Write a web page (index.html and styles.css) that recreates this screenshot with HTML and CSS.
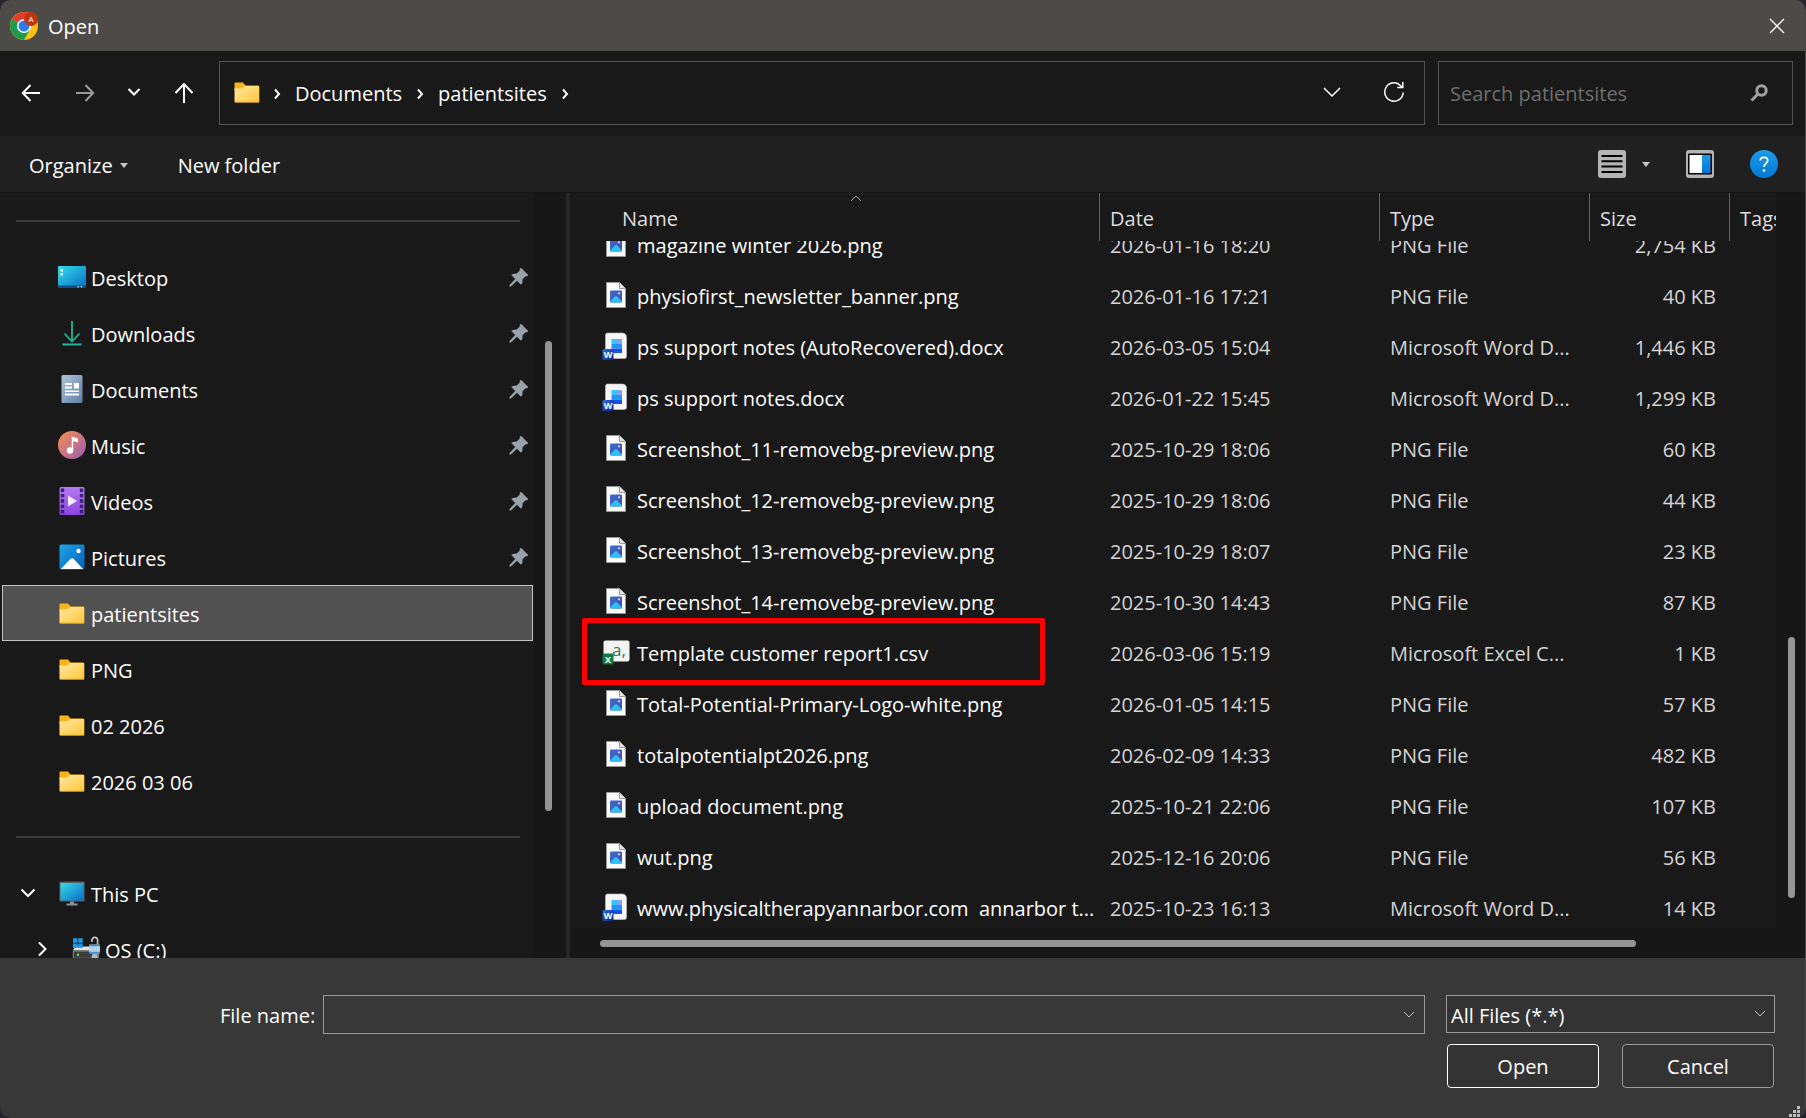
FILE: index.html
```html
<!DOCTYPE html>
<html lang="en">
<head>
  <meta charset="UTF-8">
  <meta name="viewport" content="width=device-width, initial-scale=1.0">
  <title>Open</title>
  <link rel="stylesheet" href="styles.css">
</head>
<body>

<!-- icon sprite -->
<svg class="sprite" width="0" height="0" aria-hidden="true">
  <defs>
    <linearGradient id="gFolder" x1="0" y1="0" x2="1" y2="1"><stop offset="0" stop-color="#ffe9a0"/><stop offset="1" stop-color="#ffc63a"/></linearGradient>
    <linearGradient id="gScreen" x1="0" y1="0" x2="1" y2="1"><stop offset="0" stop-color="#35dcea"/><stop offset="1" stop-color="#0a6cc4"/></linearGradient>
    <linearGradient id="gDown" x1="0" y1="0" x2="1" y2="1"><stop offset="0" stop-color="#2cc48a"/><stop offset="1" stop-color="#12a9a2"/></linearGradient>
    <linearGradient id="gDoc" x1="0" y1="0" x2="1" y2="1"><stop offset="0" stop-color="#b0c4da"/><stop offset="1" stop-color="#5f7fa3"/></linearGradient>
    <linearGradient id="gMusic" x1="0" y1="0" x2="1" y2="1"><stop offset="0" stop-color="#f7904f"/><stop offset="1" stop-color="#9a5cb4"/></linearGradient>
    <linearGradient id="gVideo" x1="0" y1="0" x2="0" y2="1"><stop offset="0" stop-color="#b67af2"/><stop offset="1" stop-color="#8a45e0"/></linearGradient>
    <linearGradient id="gPic" x1="0" y1="0" x2="1" y2="1"><stop offset="0" stop-color="#1ea4ea"/><stop offset="1" stop-color="#0560b8"/></linearGradient>
    <linearGradient id="gPng" x1="0" y1="0" x2="1" y2="1"><stop offset="0" stop-color="#3c6fd0"/><stop offset="1" stop-color="#4a45a8"/></linearGradient>
    <linearGradient id="gHelp" x1="0" y1="0" x2="0" y2="1"><stop offset="0" stop-color="#1f9ae8"/><stop offset="1" stop-color="#0078d7"/></linearGradient>
    <linearGradient id="gWord" x1="0" y1="0" x2="1" y2="1"><stop offset="0" stop-color="#2f6be0"/><stop offset="1" stop-color="#08228f"/></linearGradient>
  </defs>

  <symbol id="folder" viewBox="0 0 28 28">
    <path d="M1.500 5.500a1 1 0 0 1 1-1h7.500l2.500 3h13v5h-24z" fill="#f8b41c"/>
    <path d="M1.500 10.500h7.500l3-2.500h13.500a.8.8 0 0 1 .8.800v14.900a.8.8 0 0 1-.8.800h-23.200a.8.8 0 0 1-.8-.8z" fill="url(#gFolder)"/>
    <path d="M2 24.200h24" stroke="#d99a1c" stroke-width=".8"/>
  </symbol>
  <symbol id="desktop" viewBox="0 0 28 28">
    <rect y="3" width="28" height="22" rx="1" fill="url(#gScreen)"/>
    <rect y="22.500" width="28" height="2.500" fill="#0b4f86"/>
    <path d="M2.500 6h2.500v2.500h-2.500zM2.500 10h2.500v2.500h-2.500z" fill="#fff"/>
    <path d="M19.500 23h1.500v1.500h-1.500zM22.700 23h1.500v1.500h-1.500z" fill="#9fd4f0"/>
  </symbol>
  <symbol id="downloads" viewBox="0 0 28 28">
    <path d="M14 2v20M6.500 14.500l7.500 8 7.500-8" fill="none" stroke="#1fb794" stroke-width="1.800"/>
    <rect x="4.500" y="24.500" width="19" height="2" fill="url(#gDown)"/>
  </symbol>
  <symbol id="documents" viewBox="0 0 28 28">
    <rect x="3.500" width="21" height="28" rx="1.500" fill="url(#gDoc)"/>
    <path d="M7 8h7v2H7zM7 11.500h7v2H7zM16 8h5v5.500h-5zM7 15.500h14v1.500H7zM7 18.500h14v2H7z" fill="#fff"/>
  </symbol>
  <symbol id="music" viewBox="0 0 28 28">
    <circle cx="14" cy="14" r="14" fill="url(#gMusic)"/>
    <ellipse cx="12" cy="19.500" rx="3.200" ry="3.200" fill="#fff"/>
    <path d="M13.700 19.500V5.500l6.300 2v4l-4.800-1.500v9.500z" fill="#fff"/>
  </symbol>
  <symbol id="videos" viewBox="0 0 28 28">
    <rect x="1.500" width="25" height="28" rx="1.500" fill="url(#gVideo)"/>
    <path d="M4.500 1.500v26M23.500 1.500v26" stroke="#3a2470" stroke-width="3.400" stroke-dasharray="3.400 2"/>
    <path d="M10 8.500l9 5.500-9 5.500z" fill="#f3ecff"/>
  </symbol>
  <symbol id="pictures" viewBox="0 0 28 28">
    <rect x="1.500" y="1.500" width="25" height="25" rx="1.500" fill="url(#gPic)"/>
    <path d="M3 26l9.500-10.200q1.500-1.300 3 0L25 26z" fill="#fff"/>
    <circle cx="20.500" cy="8" r="2.200" fill="#fff"/>
  </symbol>
  <symbol id="pc" viewBox="0 0 28 28">
    <rect x="1.500" y="2.500" width="25" height="20" rx="1" fill="#59636d"/>
    <rect x="2.500" y="4" width="23" height="17.500" fill="url(#gScreen)"/>
    <path d="M12 22.500h4v2h3.500v2h-11v-2h3.500z" fill="#8b949c"/>
  </symbol>
  <symbol id="drive" viewBox="0 0 28 28">
    <path d="M3.500 11.500h20l3.500 4H.8z" fill="#e3e3e3"/>
    <path d="M1 3.300h4.500v4.500H1zM6.200 3.300h4.500v4.500h-4.500zM1 8.500h4.500v4.500H1zM6.200 8.500h4.500v4.500h-4.500z" fill="#1c9cec"/>
    <rect x=".8" y="15.500" width="26.200" height="8.500" rx=".8" fill="#777"/>
    <rect x="2" y="16.700" width="22" height="6" fill="#3b3b3b"/>
    <rect x="5" y="18.500" width="2" height="2.500" fill="#49e05a"/>
    <path d="M20 7V5.200a2.800 2.800 0 0 1 5.600 0V9.500" fill="none" stroke="#b9c2ca" stroke-width="1.700"/>
    <rect x="17" y="9.500" width="11" height="9" rx="1" fill="#b6d2e8"/>
    <path d="M17 10.500h11M17 17.500h11" stroke="#3d92d6" stroke-width="1.500"/>
    <circle cx="22.600" cy="21.800" r="3" fill="#aeb8c0"/>
  </symbol>
  <symbol id="pin" viewBox="0 0 20 20">
    <path d="M12 .8L19.200 8q-.6 1.600-3 1.600l-2.700 2.800q.6 3.300-1.500 5.400l-4-4L2 19.500.500 19.500.500 18l5.700-6L2.300 8.100Q4.400 6 7.600 6.600l2.800-2.700Q10.400 1.500 12 .8z" fill="#97a2aa"/>
  </symbol>
  <symbol id="png" viewBox="0 0 28 28">
    <path d="M4.500 1.500h13l6 6v19h-19z" fill="#fafafa" stroke="#9a9a9a" stroke-width=".8"/>
    <path d="M17.500 1.500v6h6" fill="#e4e4e4" stroke="#9a9a9a" stroke-width="1"/>
    <rect x="8" y="9.500" width="12" height="12" rx="1" fill="url(#gPng)"/>
    <path d="M8 20.500l4.800-5q1.200-1 2.400 0l4.800 5v.5a.8.8 0 0 1-.8.500H9z" fill="#2cc0f2"/>
    <circle cx="17" cy="12.300" r="1.100" fill="#d7e4ff"/>
  </symbol>
  <symbol id="word" viewBox="0 0 28 28">
    <path d="M5.500 1h14.500q4.500 0 4.500 4.500v19a2 2 0 0 1-2 2h-17a2 2 0 0 1-2-2v-21.500a2 2 0 0 1 2-2z" fill="#f6f6f6" stroke="#c4c4c4" stroke-width=".6"/>
    <rect x="9.500" y="7" width="10.500" height="5" fill="#38c4f8"/>
    <rect x="15.500" y="7" width="4.500" height="5" fill="#8f9df4"/>
    <rect x="9.500" y="12" width="10.500" height="4.500" fill="#2196f0"/>
    <rect x="9.500" y="16.500" width="10.500" height="4.500" fill="#1453e6"/>
    <rect x=".5" y="17" width="11" height="11" rx="1.500" fill="url(#gWord)"/>
    <text class="badge-letter" x="6" y="25.500">W</text>
  </symbol>
  <symbol id="excel" viewBox="0 0 28 28">
    <rect x="1.500" y="2.500" width="26" height="21" rx="2" fill="#f4f4f4"/>
    <text class="csv-letters" x="10" y="17.500">a,</text>
    <rect x=".5" y="15.500" width="11" height="11" rx="1.500" fill="#127a41"/>
    <text class="badge-letter" x="6" y="24.500">X</text>
  </symbol>
</svg>

<div class="dialog">
  <header class="title-bar">
    <svg class="app-icon" viewBox="0 0 28 28" aria-hidden="true">
      <circle cx="14" cy="14" r="14" fill="#fbc116"/>
      <path d="M14 14L1.900 7A14 14 0 0 1 26.100 7z" fill="#e33b2e"/>
      <path d="M14 14L1.900 7A14 14 0 0 0 14 28L20 17.500z" fill="#229a4c"/>
      <circle cx="14" cy="14" r="7" fill="#fff"/>
      <circle cx="14" cy="14" r="5.500" fill="#2f7de9"/>
      <circle cx="21" cy="7" r="7" fill="#bf3510"/>
      <text class="app-letter" x="21" y="10">A</text>
    </svg>
    <h1>Open</h1>
    <button class="close" type="button" aria-label="Close">
      <svg width="16" height="16" viewBox="0 0 16 16"><path d="M1 1l14 14M15 1L1 15" stroke="#fff" stroke-width="1.300"/></svg>
    </button>
  </header>

  <nav class="nav-bar">
    <button class="back" type="button" aria-label="Back"><svg width="20" height="20" viewBox="0 0 20 20"><path d="M19 10H2M9.500 2L1.800 10l7.700 8"/></svg></button>
    <button class="forward" type="button" aria-label="Forward"><svg width="20" height="20" viewBox="0 0 20 20"><path d="M1 10h17M10.500 2l7.700 8-7.700 8"/></svg></button>
    <button class="recent" type="button" aria-label="Recent locations"><svg width="14" height="20" viewBox="0 0 14 20"><path d="M1.500 6l5.500 5.500L12.500 6"/></svg></button>
    <button class="up" type="button" aria-label="Up"><svg width="20" height="20" viewBox="0 0 20 20"><path d="M10 20V1.500M1.500 10L10 1l8.500 9"/></svg></button>

    <div class="address">
      <svg class="icon" aria-hidden="true"><use href="#folder"/></svg>
      <svg class="crumb-sep" viewBox="0 0 8 12"><path d="M2 1.500l4 4.500-4 4.500"/></svg>
      <a href="#documents">Documents</a>
      <svg class="crumb-sep" viewBox="0 0 8 12"><path d="M2 1.500l4 4.500-4 4.500"/></svg>
      <a href="#patientsites">patientsites</a>
      <svg class="crumb-sep" viewBox="0 0 8 12"><path d="M2 1.500l4 4.500-4 4.500"/></svg>
      <button class="history" type="button" aria-label="Previous locations"><svg width="20" height="12" viewBox="0 0 20 12"><path d="M2 2l8 8 8-8"/></svg></button>
      <button type="button" aria-label="Refresh"><svg width="22" height="22" viewBox="0 0 22 22"><path d="M20.200 11.500a9.200 9.200 0 1 1-2.500-6.800l1.500 1.600M19.800 1v5.500h-5.500"/></svg></button>
    </div>

    <div class="search">
      <input type="text" placeholder="Search patientsites" aria-label="Search patientsites">
      <svg width="18" height="18" viewBox="0 0 18 18" aria-hidden="true"><circle cx="11.500" cy="6.500" r="4.700"/><path d="M8 10l-6.500 6.500"/></svg>
    </div>
  </nav>

  <div class="toolbar">
    <button class="command" type="button">Organize <span class="caret"></span></button>
    <button class="command" type="button">New folder</button>
    <button class="view" type="button" aria-label="Change your view">
      <svg width="28" height="28" viewBox="0 0 28 28"><rect width="28" height="28" rx="3" fill="#b4b4b4"/><path d="M3.500 6h21M3.500 11.300h21M3.500 16.600h21M3.500 22h21" stroke="#000" stroke-width="2"/></svg>
      <span class="caret"></span>
    </button>
    <button class="preview" type="button" aria-label="Show the preview pane">
      <svg width="28" height="28" viewBox="0 0 28 28"><rect width="28" height="28" rx="3" fill="#b4b4b4"/><rect x="2" y="3.500" width="24" height="21" rx="1" fill="#000"/><rect x="3.500" y="5" width="12.500" height="18" fill="#fff"/><rect x="16" y="5" width="8.500" height="18" fill="url(#gHelp)"/></svg>
    </button>
    <button type="button" aria-label="Get help">
      <svg width="28" height="28" viewBox="0 0 28 28"><circle cx="14" cy="14" r="14" fill="url(#gHelp)"/><path d="M10.300 10.500q0-3.200 3.700-3.200t3.700 3.200c0 2.800-3.700 3-3.700 6.500" fill="none" stroke="#fff" stroke-width="1.800"/><circle cx="14" cy="20.500" r="1.300" fill="#fff"/></svg>
    </button>
  </div>

  <main class="content">
    <aside class="sidebar">
      <div class="tree">
        <hr>
        <ul>
          <li><svg class="icon"><use href="#desktop"/></svg>Desktop<svg class="pin"><use href="#pin"/></svg></li>
          <li><svg class="icon"><use href="#downloads"/></svg>Downloads<svg class="pin"><use href="#pin"/></svg></li>
          <li><svg class="icon"><use href="#documents"/></svg>Documents<svg class="pin"><use href="#pin"/></svg></li>
          <li><svg class="icon"><use href="#music"/></svg>Music<svg class="pin"><use href="#pin"/></svg></li>
          <li><svg class="icon"><use href="#videos"/></svg>Videos<svg class="pin"><use href="#pin"/></svg></li>
          <li><svg class="icon"><use href="#pictures"/></svg>Pictures<svg class="pin"><use href="#pin"/></svg></li>
          <li class="selected"><svg class="icon"><use href="#folder"/></svg>patientsites</li>
          <li><svg class="icon"><use href="#folder"/></svg>PNG</li>
          <li><svg class="icon"><use href="#folder"/></svg>02 2026</li>
          <li><svg class="icon"><use href="#folder"/></svg>2026 03 06</li>
        </ul>
        <hr>
        <ul>
          <li class="expandable"><svg class="twisty" viewBox="0 0 16 16"><path d="M1.500 4.500L8 11l6.500-6.500"/></svg><svg class="icon"><use href="#pc"/></svg>This PC</li>
          <li class="expandable child"><svg class="twisty" viewBox="0 0 16 16"><path d="M5 1.500L11.500 8 5 14.500"/></svg><svg class="icon"><use href="#drive"/></svg>OS (C:)</li>
        </ul>
      </div>
      <div class="track tree-track"><div class="thumb"></div></div>
    </aside>

    <section class="files">
      <div class="files-view">
        <div class="list">
          <table>
            <thead>
              <tr>
                <th class="name">Name<svg class="sort" viewBox="0 0 12 8"><path d="M1 7l5-5 5 5"/></svg></th>
                <th class="date">Date</th>
                <th class="type">Type</th>
                <th class="size">Size</th>
                <th class="tags">Tags</th>
              </tr>
            </thead>
            <tbody>
              <tr class="clipped">
                <td><div class="cell"><svg class="icon"><use href="#png"/></svg>magazine winter 2026.png</div></td>
                <td><div class="cell">2026-01-16 18:20</div></td>
                <td><div class="cell">PNG File</div></td>
                <td><div class="cell">2,754 KB</div></td>
                <td></td>
              </tr>
              <tr>
                <td><div class="cell"><svg class="icon"><use href="#png"/></svg>physiofirst_newsletter_banner.png</div></td>
                <td>2026-01-16 17:21</td><td>PNG File</td><td>40 KB</td><td></td>
              </tr>
              <tr>
                <td><div class="cell"><svg class="icon"><use href="#word"/></svg>ps support notes (AutoRecovered).docx</div></td>
                <td>2026-03-05 15:04</td><td>Microsoft Word D...</td><td>1,446 KB</td><td></td>
              </tr>
              <tr>
                <td><div class="cell"><svg class="icon"><use href="#word"/></svg>ps support notes.docx</div></td>
                <td>2026-01-22 15:45</td><td>Microsoft Word D...</td><td>1,299 KB</td><td></td>
              </tr>
              <tr>
                <td><div class="cell"><svg class="icon"><use href="#png"/></svg>Screenshot_11-removebg-preview.png</div></td>
                <td>2025-10-29 18:06</td><td>PNG File</td><td>60 KB</td><td></td>
              </tr>
              <tr>
                <td><div class="cell"><svg class="icon"><use href="#png"/></svg>Screenshot_12-removebg-preview.png</div></td>
                <td>2025-10-29 18:06</td><td>PNG File</td><td>44 KB</td><td></td>
              </tr>
              <tr>
                <td><div class="cell"><svg class="icon"><use href="#png"/></svg>Screenshot_13-removebg-preview.png</div></td>
                <td>2025-10-29 18:07</td><td>PNG File</td><td>23 KB</td><td></td>
              </tr>
              <tr>
                <td><div class="cell"><svg class="icon"><use href="#png"/></svg>Screenshot_14-removebg-preview.png</div></td>
                <td>2025-10-30 14:43</td><td>PNG File</td><td>87 KB</td><td></td>
              </tr>
              <tr class="marked">
                <td><div class="cell"><svg class="icon"><use href="#excel"/></svg>Template customer report1.csv</div></td>
                <td>2026-03-06 15:19</td><td>Microsoft Excel C...</td><td>1 KB</td><td></td>
              </tr>
              <tr>
                <td><div class="cell"><svg class="icon"><use href="#png"/></svg>Total-Potential-Primary-Logo-white.png</div></td>
                <td>2026-01-05 14:15</td><td>PNG File</td><td>57 KB</td><td></td>
              </tr>
              <tr>
                <td><div class="cell"><svg class="icon"><use href="#png"/></svg>totalpotentialpt2026.png</div></td>
                <td>2026-02-09 14:33</td><td>PNG File</td><td>482 KB</td><td></td>
              </tr>
              <tr>
                <td><div class="cell"><svg class="icon"><use href="#png"/></svg>upload document.png</div></td>
                <td>2025-10-21 22:06</td><td>PNG File</td><td>107 KB</td><td></td>
              </tr>
              <tr>
                <td><div class="cell"><svg class="icon"><use href="#png"/></svg>wut.png</div></td>
                <td>2025-12-16 20:06</td><td>PNG File</td><td>56 KB</td><td></td>
              </tr>
              <tr>
                <td><div class="cell"><svg class="icon"><use href="#word"/></svg>www.physicaltherapyannarbor.com&nbsp; annarbor t...</div></td>
                <td>2025-10-23 16:13</td><td>Microsoft Word D...</td><td>14 KB</td><td></td>
              </tr>
            </tbody>
          </table>
        </div>
        <div class="track list-track"><div class="thumb"></div></div>
      </div>
      <div class="track bottom-track"><div class="thumb"></div></div>
    </section>
  </main>

  <footer class="footer">
    <label for="fileName">File name:</label>
    <div class="combo">
      <input type="text" id="fileName">
      <button type="button" aria-label="Recent file names"><svg class="chevron" viewBox="0 0 12 8"><path d="M1 1l5 5 5-5"/></svg></button>
    </div>
    <div class="actions">
      <div class="filter">
        <select aria-label="File type">
          <option>All Files (*.*)</option>
        </select>
        <svg class="chevron" viewBox="0 0 12 8"><path d="M1 1l5 5 5-5"/></svg>
      </div>
      <div class="buttons">
        <button class="primary" type="button">Open</button>
        <button type="button">Cancel</button>
      </div>
    </div>
    <svg class="grip" viewBox="0 0 12 12" aria-hidden="true"><path d="M8 0h3v3H8zM4 4h3v3H4zM8 4h3v3H8zM0 8h3v3H0zM4 8h3v3H4zM8 8h3v3H8z"/></svg>
  </footer>
</div>

</body>
</html>
```
FILE: styles.css
```css
* {
  margin: 0;
  padding: 0;
  box-sizing: border-box;
}
body {
  background: #25232c;
  color: #fff;
  font-family: "Open Sans", "Noto Sans", sans-serif;
  font-size: 20px;
  line-height: 28px;
}
button, input, select {
  font: inherit;
  color: inherit;
  background: none;
  border: none;
  outline: none;
}
button {
  display: flex;
  align-items: center;
  justify-content: center;
}
a {
  color: inherit;
  text-decoration: none;
}
ul {
  list-style: none;
}
.sprite {
  position: absolute;
}
.icon {
  width: 28px;
  height: 28px;
  flex: none;
  margin-bottom: 4px;
}
.badge-letter {
  fill: #fff;
  font-size: 9px;
  font-weight: 700;
  text-anchor: middle;
}
.csv-letters {
  fill: #2c7a48;
  font-size: 17px;
}
.dialog {
  display: flex;
  flex-direction: column;
  height: 100vh;
  background: #191919;
  border-right: 1px solid #454545;
  border-radius: 10px;
  overflow: hidden;
}

/* title bar */
.title-bar {
  display: flex;
  align-items: center;
  gap: 10px;
  height: 51px;
  padding: 0 10px;
  background: #4d4b48;
}
.title-bar h1 {
  padding-top: 2px;
  font-size: 20px;
  font-weight: 400;
}
.app-icon {
  width: 28px;
  height: 28px;
}
.app-letter {
  fill: #fff;
  font-size: 8px;
  text-anchor: middle;
}
.close {
  width: 36px;
  height: 36px;
  margin-left: auto;
}

/* navigation */
.nav-bar {
  display: flex;
  align-items: center;
  height: 85px;
  padding: 0 12px 2px 8px;
}
.nav-bar svg {
  fill: none;
  stroke: #fff;
  stroke-width: 2;
}
.nav-bar .icon {
  stroke: none;
}
.back, .forward, .recent, .up {
  width: 46px;
  height: 46px;
}
.forward {
  margin: 0 5px 0 8px;
}
.forward svg {
  stroke: #999;
}
.recent {
  width: 42px;
}
.up {
  margin: 0 12px 0 6px;
}
.address, .search {
  display: flex;
  align-items: center;
  height: 64px;
  border: 1px solid #535353;
}
.address {
  flex: 1;
  padding: 2px 15px 0 13px;
}
.address a {
  margin: 0 14px;
}
.crumb-sep {
  width: 8px;
  height: 12px;
}
.address .icon + .crumb-sep {
  margin-left: 12px;
}
.address button {
  width: 30px;
  height: 30px;
  margin-bottom: 4px;
}
.address button svg {
  stroke-width: 1.5;
}
.address .history {
  margin: 0 32px 4px auto;
}
.search {
  width: 355px;
  margin-left: 13px;
  padding: 2px 24px 0 11px;
}
.search input {
  flex: 1;
  min-width: 0;
}
.search input::placeholder {
  color: #6e6e6e;
}
.search svg {
  margin-bottom: 2px;
  stroke: #a0a0a0;
  stroke-width: 3;
}

/* toolbar */
.toolbar {
  display: flex;
  align-items: center;
  height: 57px;
  padding: 0 27px 0 29px;
  gap: 50px;
  background: #202020;
  border-bottom: 1px solid #151515;
}
.command {
  padding-top: 4px;
}
.caret {
  margin: 0 0 2px 7px;
  border: 4px solid transparent;
  border-top: 5px solid #c8c8c8;
  border-bottom: none;
}
.view {
  margin-left: auto;
}
.view .caret {
  margin: 0 0 0 16px;
}
.preview {
  margin: 0 -14px;
}

/* folder tree */
.content {
  display: flex;
  flex: 1;
  min-height: 0;
}
.sidebar {
  display: flex;
  width: 570px;
  border-right: 4px solid #272727;
}
.tree {
  flex: 1;
  padding-left: 2px;
  overflow: hidden;
}
.tree hr {
  height: 2px;
  margin: 27px 13px 27px 14px;
  border: none;
  background: #3b3b3b;
}
.tree li {
  display: flex;
  align-items: center;
  gap: 5px;
  height: 56px;
  padding: 4px 4px 0 56px;
}
.tree .selected {
  padding-left: 55px;
  background: #515151;
  border: 1px solid #c4c4c4;
}
.tree .expandable {
  padding-left: 18px;
}
.tree .child {
  padding-left: 32px;
}
.twisty {
  width: 16px;
  height: 16px;
  margin: 0 17px 4px 0;
  fill: none;
  stroke: #fff;
  stroke-width: 2;
}
.pin {
  width: 20px;
  height: 20px;
  margin: 0 0 4px auto;
}

/* scroll bars */
.track {
  display: flex;
  background: #171717;
}
.thumb {
  flex: 1;
  background: #959595;
  border-radius: 4px;
}
.tree-track {
  width: 33px;
  padding: 148px 14px 147px 12px;
}
.list-track {
  width: 29px;
  padding: 444px 10px 30px 12px;
}
.bottom-track {
  height: 30px;
  padding: 12px 169px 11px 30px;
}

/* file list */
.files {
  display: flex;
  flex: 1;
  flex-direction: column;
  min-width: 0;
}
.files-view {
  display: flex;
  flex: 1;
  min-height: 0;
}
.list {
  flex: 1;
  min-width: 0;
  overflow: hidden;
}
table {
  width: 100%;
  table-layout: fixed;
  border-collapse: separate;
  border-spacing: 0;
}
th {
  height: 48px;
  padding: 4px 0 0 10px;
  font-weight: 400;
  text-align: left;
  color: #dedede;
  border-right: 1px solid #636363;
  overflow: hidden;
}
th.name {
  position: relative;
  padding-left: 52px;
}
th.date {
  width: 280px;
}
th.type {
  width: 210px;
}
th.size {
  width: 140px;
}
th.tags {
  width: 46px;
  border-right: none;
}
.sort {
  position: absolute;
  top: 1px;
  left: 280px;
  width: 12px;
  height: 8px;
  fill: none;
  stroke: #a8a8a8;
}
td {
  height: 51px;
  padding-left: 10px;
  color: #d4d4d4;
  white-space: nowrap;
}
td:first-child {
  position: relative;
  padding-left: 32px;
  color: #fff;
}
td:nth-child(4) {
  padding-right: 14px;
  text-align: right;
}
.cell {
  display: flex;
  align-items: center;
  gap: 7px;
}
/* row partly scrolled under the header */
.clipped td {
  height: 30px;
}
.clipped .cell {
  align-items: flex-end;
  height: 30px;
  padding-bottom: 11px;
  overflow: hidden;
}
.clipped .icon {
  margin-bottom: 2px;
}
.clipped td:nth-child(4) .cell {
  justify-content: flex-end;
}
.marked td:first-child::after {
  content: "";
  position: absolute;
  top: -10px;
  right: 55px;
  bottom: -6px;
  left: 12px;
  border: 5px solid #fe0000;
  border-radius: 2px;
}

/* footer */
.footer {
  position: relative;
  display: flex;
  align-items: flex-start;
  height: 160px;
  padding: 37px 30px 0 220px;
  background: #383838;
}
.footer label {
  width: 103px;
  padding-top: 7px;
}
.combo {
  display: flex;
  flex: 1;
  height: 39px;
  border: 1px solid #9b9b9b;
}
.combo input {
  flex: 1;
  min-width: 0;
  padding: 0 4px;
}
.combo button {
  width: 30px;
}
.chevron {
  width: 12px;
  height: 8px;
  fill: none;
  stroke: #c0c0c0;
}
.actions {
  width: 329px;
  margin-left: 21px;
}
.filter {
  position: relative;
}
.filter select {
  appearance: none;
  display: block;
  width: 100%;
  height: 38px;
  padding: 4px 4px 0;
  background: #333;
  border: 1px solid #9b9b9b;
}
.filter .chevron {
  position: absolute;
  top: 15px;
  right: 9px;
}
.buttons {
  display: flex;
  gap: 23px;
  margin: 11px 1px 0;
}
.buttons button {
  flex: 1;
  height: 44px;
  padding-top: 2px;
  background: #333;
  border: 1px solid #9b9b9b;
  border-radius: 4px;
}
.buttons .primary {
  border-color: #fff;
}
.grip {
  position: absolute;
  right: 4px;
  bottom: 0;
  width: 12px;
  height: 12px;
  fill: #bdbdbd;
}
```
